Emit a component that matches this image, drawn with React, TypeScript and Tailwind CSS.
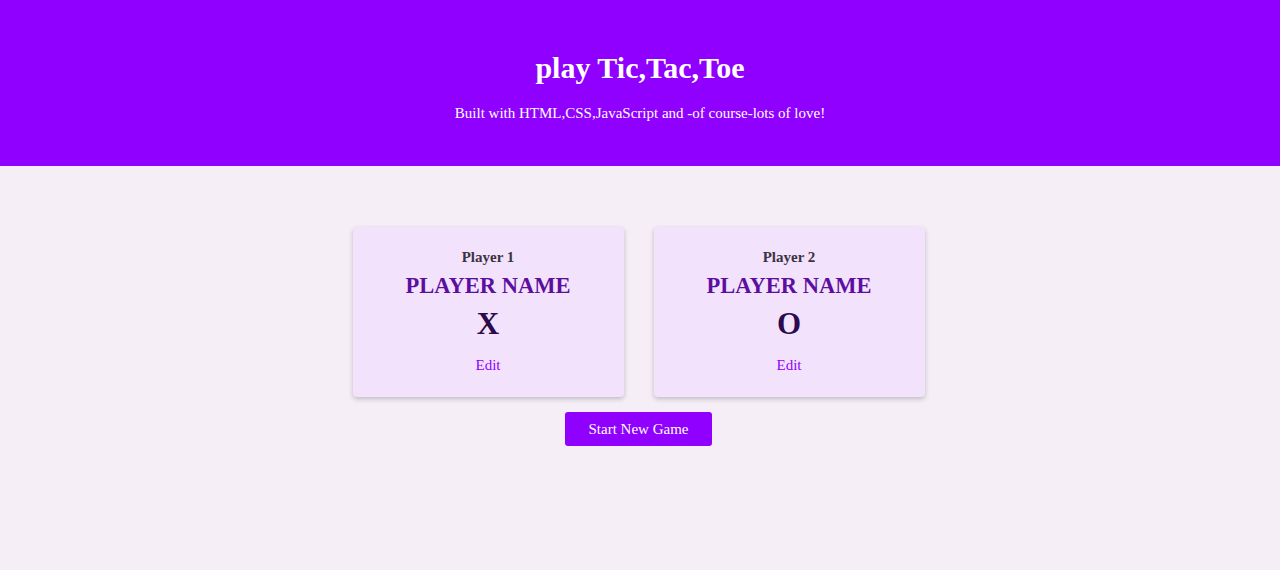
import React from "react";

function PlayerCard({ label, symbol }: { label: string; symbol: string }) {
  return (
    <div className="w-[271px] h-[170px] bg-[#f3e2fc] rounded-[4px] shadow-[0_2px_5px_rgba(0,0,0,0.22)] flex flex-col items-center pt-[20px]">
      <div className="text-[15px] leading-[20px] font-bold text-[#3a3340]">{label}</div>
      <div className="mt-[7px] text-[22.5px] leading-[24px] font-bold text-[#5c0f9f]">PLAYER NAME</div>
      <div className="mt-[9px] text-[31px] leading-[34px] font-bold text-[#2b0a4d]">{symbol}</div>
      <div className="mt-[14px] text-[15px] leading-[20px] text-[#9000ff]">Edit</div>
    </div>
  );
}

export default function App() {
  return (
    <div className="w-[1280px] h-[570px] bg-[#f5eef6] font-['Liberation_Serif',serif] flex flex-col">
      <header className="h-[166px] bg-[#9000ff] flex flex-col items-center text-white">
        <h1 className="mt-[50px] text-[30px] leading-[36px] font-bold">play Tic,Tac,Toe</h1>
        <p className="mt-[17px] text-[15px] leading-[20px]">Built with HTML,CSS,JavaScript and -of course-lots of love!</p>
      </header>
      <main className="flex flex-col items-center pt-[61px] pr-[3px]">
        <div className="flex gap-[30px]">
          <PlayerCard label="Player 1" symbol="X" />
          <PlayerCard label="Player 2" symbol="O" />
        </div>
        <button className="mt-[15px] w-[147px] h-[34px] bg-[#9000ff] text-white text-[15px] rounded-[3px] font-['Liberation_Serif',serif]">
          Start New Game
        </button>
      </main>
    </div>
  );
}
